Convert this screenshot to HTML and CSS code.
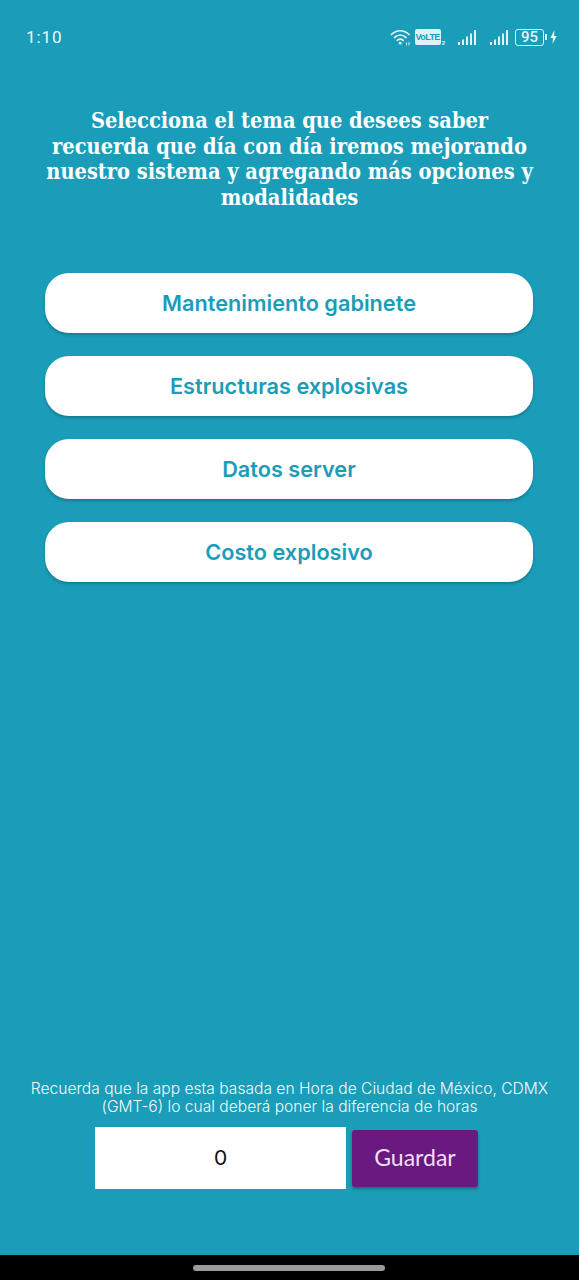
FILE: index.html
```html
<!DOCTYPE html>
<html lang="es">
<head>
<meta charset="utf-8">
<title>Temas</title>
<link rel="stylesheet" href="styles.css">
</head>
<body>
<div class="screen">
  <header class="status">
    <span class="time">1:10</span>
    <div class="icons">
      <svg class="i-wifi" width="22" height="18" viewBox="0 0 22 18" fill="none" stroke="#e4f4f8" stroke-width="1.7" stroke-linecap="round"><path d="M1.500 6.500C6.500 1.500 14 1.500 19 6.500"/><path d="M4.500 9.500C8 6.300 12.500 6.300 16 9.500"/><path d="M7.300 12.400C9 11 11.500 11 13.200 12.400"/><circle cx="10.200" cy="15.200" r="1.400" fill="#e4f4f8" stroke="none"/><path d="M16.500 15v2M19 14.500v2.500" stroke-width="1"/></svg>
      <span class="volte">VoLTE</span><span class="sub">2</span>
      <svg class="i-sig" width="18" height="15" viewBox="0 0 18 15" fill="#e4f4f8"><rect x="0" y="12" width="2" height="3"/><rect x="4" y="9.500" width="2" height="5.500"/><rect x="8" y="6.500" width="2" height="8.500"/><rect x="12" y="3.500" width="2" height="11.500"/><rect x="16" y="0" width="2" height="15"/></svg>
      <svg class="i-sig second" width="18" height="15" viewBox="0 0 18 15" fill="#e4f4f8"><rect x="0" y="12" width="2" height="3"/><rect x="4" y="9.500" width="2" height="5.500"/><rect x="8" y="6.500" width="2" height="8.500"/><rect x="12" y="3.500" width="2" height="11.500"/><rect x="16" y="0" width="2" height="15"/></svg>
      <span class="battery">95</span><span class="nub"></span>
      <svg width="7" height="14" viewBox="0 0 7 14" fill="#e4f4f8"><path d="M4.500 0 0.300 8H3L2.500 14 6.700 6H4Z"/></svg>
    </div>
  </header>

  <h1 class="title">Selecciona el tema que desees saber recuerda que día con día iremos mejorando nuestro sistema y agregando más opciones y modalidades</h1>

  <nav class="topics">
    <a class="topic">Mantenimiento gabinete</a>
    <a class="topic">Estructuras explosivas</a>
    <a class="topic">Datos server</a>
    <a class="topic">Costo explosivo</a>
  </nav>

  <footer class="foot">
    <p class="note">Recuerda que la app esta basada en Hora de Ciudad de México, CDMX (GMT-6) lo cual deberá poner la diferencia de horas</p>
    <div class="form">
      <div class="field">0</div>
      <button class="save">Guardar</button>
    </div>
  </footer>
</div>
<div class="navbar"><span class="pill"></span></div>
</body>
</html>
```
FILE: styles.css
```css
* { box-sizing: border-box; }
html, body { margin: 0; padding: 0; }
body { width: 579px; height: 1280px; background: #000; overflow: hidden; font-family: "Noto Sans", sans-serif; }
.screen { height: 1255px; background: #1a9db8; display: flex; flex-direction: column; color: #fff; }

.status { display: flex; justify-content: space-between; align-items: center; height: 30px; margin-top: 22px; padding: 0 22px 0 26px; }
.time { font: 400 17px/30px Roboto, sans-serif; letter-spacing: 0.9px; color: #eef8fa; }
.icons { display: flex; align-items: center; height: 30px; }
.volte { width: 26px; height: 16px; margin-left: 3px; background: #dff1f5; color: #1a9db8; border-radius: 2px; font: 700 9px/16px "Liberation Sans", sans-serif; text-align: center; letter-spacing: -0.6px; }
.sub { font: 700 6px/6px "Liberation Sans", sans-serif; color: #e4f4f8; align-self: flex-end; margin: 0 0 6px 1px; }
.i-sig { margin-left: 13px; }
.i-sig.second { margin-left: 14px; }
.battery { width: 29px; height: 17px; margin-left: 7px; border: 1.5px solid #e4f4f8; border-radius: 3px; font: 500 15px/14px Roboto, sans-serif; text-align: center; color: #e4f4f8; }
.nub { width: 2px; height: 6px; margin: 0 3px 0 1px; background: #e4f4f8; }

.title { margin: 56px 42px 0; font: 700 21.600px/25.500px "DejaVu Serif", serif; font-stretch: condensed; text-align: center; }

.topics { display: flex; flex-direction: column; gap: 23px; margin: 63px 46px 0 45px; }
.topic { height: 60px; padding-top: 2px; display: flex; align-items: center; justify-content: center; background: #fff; border-radius: 24px; box-shadow: 0 2px 3px rgba(0,0,0,.22); color: #1a9db8; font: 600 21.700px/1 Inter, sans-serif; }

.foot { margin-top: auto; padding-bottom: 66px; }
.note { margin: 0 28px; font: 300 15.600px/18px Inter, sans-serif; text-align: center; color: #f2fafc; }
.form { display: flex; align-items: center; gap: 6px; margin: 11px 0 0 95px; }
.field { width: 251px; height: 62px; padding-bottom: 3px; background: #fff; color: #111; display: flex; align-items: center; justify-content: center; font: 400 21px/1 Lato, sans-serif; }
.save { width: 126px; height: 57px; border: 0; padding: 0 0 2px; border-radius: 3px; background: #691a80; color: #f5dcf5; font: 400 23px/1 Lato, sans-serif; box-shadow: 0 2px 3px rgba(0,0,0,.3); }

.navbar { height: 25px; padding-right: 2px; display: flex; align-items: center; justify-content: center; background: #000; }
.pill { width: 192px; height: 6px; border-radius: 3px; background: #9a9a9a; }
```
